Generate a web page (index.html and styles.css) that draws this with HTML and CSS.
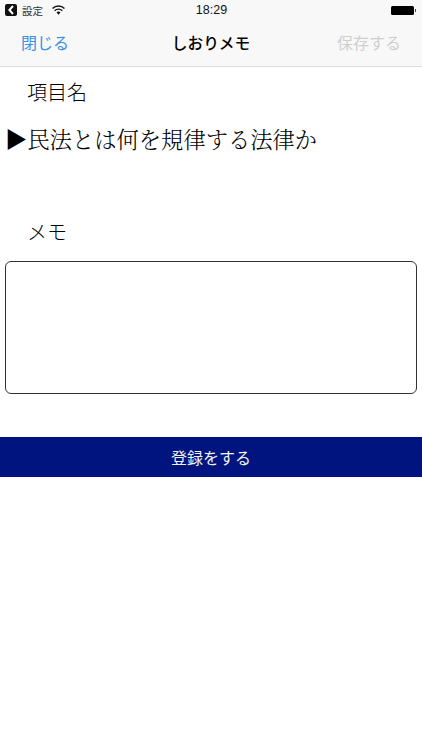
FILE: index.html
```html
<!DOCTYPE html>
<html lang="ja">
<head>
    <meta charset="UTF-8">
    <meta name="viewport" content="width=device-width, initial-scale=1.0">
    <title>しおりメモ</title>
    <link rel="stylesheet" href="styles.css">
</head>
<body>
    <div class="status-bar">
        <div class="status-left">
            <span class="back-badge">
                <svg width="8" height="10" viewBox="0 0 8 10"><path d="M6 1 L2.4 5 L6 9" fill="none" stroke="#fff" stroke-width="2"/></svg>
            </span>
            <span class="status-text">設定</span>
            <svg class="wifi" width="13" height="10" viewBox="0 0 14 10">
                <path d="M0.6 3.4 A9 9 0 0 1 13.4 3.4" fill="none" stroke="#111" stroke-width="1.5"/>
                <path d="M2.9 5.7 A5.8 5.8 0 0 1 11.1 5.7" fill="none" stroke="#111" stroke-width="1.5"/>
                <path d="M7 10 L4.9 7.7 A3 3 0 0 1 9.1 7.7 Z" fill="#111"/>
            </svg>
        </div>
        <div class="status-time">18:29</div>
        <div class="status-right">
            <span class="battery"></span>
            <span class="battery-tip"></span>
        </div>
    </div>

    <div class="nav-bar">
        <a class="nav-close">閉じる</a>
        <div class="nav-title">しおりメモ</div>
        <a class="nav-save">保存する</a>
    </div>

    <div class="field-label">項目名</div>
    <div class="item-name">▶民法とは何を規律する法律か</div>

    <div class="field-label memo-label">メモ</div>
    <div class="memo-box"></div>

    <button class="submit-btn">登録をする</button>
</body>
</html>
```

FILE: styles.css
```css
/* Base styles */
body {
    margin: 0;
    background: #fff;
    color: #000;
    font-family: "Noto Sans CJK JP", "Liberation Sans", sans-serif;
}

/* Status bar */
.status-bar {
    display: grid;
    grid-template-columns: 1fr auto 1fr;
    align-items: center;
    height: 20px;
    padding: 0 6px 0 5px;
    background: #f8f8f8;
}
.status-left {
    display: flex;
    align-items: center;
}
.back-badge {
    display: flex;
    align-items: center;
    justify-content: center;
    width: 12px;
    height: 12px;
    background: #111;
    border-radius: 2px;
}
.status-text {
    margin-left: 5px;
    font-size: 10.5px;
    color: #333;
}
.wifi {
    margin-left: 9px;
}
.status-time {
    margin-left: 2px;
    font-family: "Liberation Sans", sans-serif;
    font-size: 12.5px;
    color: #111;
}
.status-right {
    display: flex;
    align-items: center;
    justify-content: flex-end;
}
.battery {
    width: 23px;
    height: 9px;
    background: #000;
    border-radius: 1.5px;
}
.battery-tip {
    width: 1.5px;
    height: 3px;
    margin-left: 1px;
    background: #444;
}

/* Navigation */
.nav-bar {
    display: grid;
    grid-template-columns: 1fr auto 1fr;
    align-items: center;
    height: 44px;
    padding: 0 21px 2px;
    background: #f8f8f8;
    border-bottom: 1px solid #dcdcdc;
}
.nav-close {
    font-size: 16px;
    color: #3f8fe0;
}
.nav-title {
    font-size: 15.7px;
    font-weight: 500;
    color: #000;
}
.nav-save {
    justify-self: end;
    font-size: 16px;
    color: #cfcfcf;
}

/* Form */
.field-label {
    margin: 11px 0 0 27px;
    font-size: 20px;
    line-height: 28px;
    font-weight: 300;
}
.item-name {
    margin: 16px 0 0 5px;
    font-family: "Noto Serif CJK JP", "Noto Sans CJK JP", serif;
    font-size: 22.3px;
    line-height: 32px;
    font-weight: 300;
}
.memo-label {
    margin-top: 64px;
}
.memo-box {
    height: 131px;
    margin: 15px 5px 0;
    border: 1px solid #333;
    border-radius: 6px;
}

/* Button */
.submit-btn {
    display: block;
    width: 100%;
    height: 40px;
    margin-top: 43px;
    border: none;
    background: #00147f;
    color: #f2f2f2;
    font-family: inherit;
    font-size: 16px;
}
```
